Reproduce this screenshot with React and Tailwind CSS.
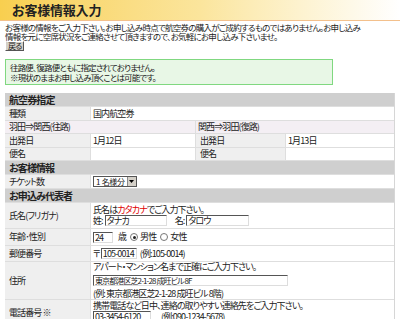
import React from "react";

const jp = { fontFamily: '"Noto Sans CJK JP", "Noto Sans", sans-serif' };

function Box({ w, children, className = "" }) {
  return (
    <span
      className={`inline-flex items-center h-[11px] ${w} border border-t-[#555] border-l-[#555] border-b-[#ddd] border-r-[#ddd] bg-white px-[1px] text-[9px] leading-[9px] text-[#222] whitespace-nowrap overflow-hidden ${className}`}
    >
      {children}
    </span>
  );
}

function Radio({ on }) {
  return (
    <span className="inline-flex items-center justify-center w-[8px] h-[8px] rounded-full border border-[#777] bg-white mr-[2px]">
      {on && <span className="w-[3px] h-[3px] rounded-full bg-[#222]" />}
    </span>
  );
}

function Sec({ children }) {
  return (
    <div className="col-span-4 h-[13px] bg-[#cfcfcf] px-[4px] flex items-center font-bold text-[10px]">
      {children}
    </div>
  );
}

function Label({ children, className = "" }) {
  return <div className={`bg-[#efefef] px-[4px] flex items-center whitespace-nowrap ${className}`}>{children}</div>;
}

function Val({ children, className = "" }) {
  return <div className={`bg-white px-[2px] flex items-center whitespace-nowrap ${className}`}>{children}</div>;
}

export default function App() {
  return (
    <div className="w-[400px] h-[319px] overflow-hidden bg-white text-[#222] tracking-[-0.9px] [font-feature-settings:'palt']" style={jp}>
      {/* header */}
      <div className="h-[21px] border-b border-[#f3c08c] bg-gradient-to-r from-[#f8cf4f] via-[#fbe59c] to-white flex items-center pl-[12px]">
        <h1 className="text-[13px] font-bold tracking-[-0.2px] text-[#222]">お客様情報入力</h1>
      </div>

      <div className="px-[5px]">
        <p className="mt-[2px] text-[8.5px] leading-[9px] tracking-[-0.75px] whitespace-nowrap">
          お客様の情報をご入力下さい。お申し込み時点で航空券の購入がご成約するものではありません。お申し込み
          <br />
          情報を元に空席状況をご連絡させて頂きますので、お気軽にお申し込み下さいませ。
        </p>
        <button className="h-[10px] px-[2px] bg-[#d4d0c8] border border-t-white border-l-white border-b-[#555] border-r-[#555] text-[8px] leading-[8px] flex items-center">
          戻る
        </button>

        <div className="mt-[8px] w-[328px] h-[26px] bg-[#e8f7e6] border border-[#80d880] px-[4px] flex flex-col justify-center text-[8.5px] leading-[10px] tracking-[-0.85px]">
          <span>往路便、復路便ともに指定されておりません。</span>
          <span>※現状のままお申し込み頂くことは可能です。</span>
        </div>

        {/* table */}
        <div className="mt-[8px] w-[390px] grid grid-cols-[85px_104px_89px_1fr] gap-px bg-[#dedede] border-r border-[#d6d6d6] text-[9px] leading-[10px]">
          <Sec>航空券指定</Sec>
          <Label className="h-[13px]">種類</Label>
          <Val className="col-span-3">国内航空券</Val>

          <div className="col-span-2 h-[12px] bg-[#f4eff4] px-[4px] flex items-center">羽田⇒関西(往路)</div>
          <div className="col-span-2 h-[12px] bg-[#f4eff4] px-[2px] flex items-center">関西⇒羽田(復路)</div>

          <Label className="h-[13px]">出発日</Label>
          <Val>1月12日</Val>
          <Label>出発日</Label>
          <Val>1月13日</Val>

          <Label className="h-[12px]">便名</Label>
          <Val></Val>
          <Label>便名</Label>
          <Val></Val>

          <Sec>お客様情報</Sec>
          <Label className="h-[13px]">チケット数</Label>
          <Val className="col-span-3">
            <span className="inline-flex items-center h-[11px] border border-[#555] bg-white">
              <span className="px-[2px] text-[8px] leading-[8px] tracking-[-0.3px]">1 名様分</span>
              <span className="w-[9px] h-[9px] bg-[#d4d0c8] border-l border-[#888] flex items-center justify-center">
                <svg width="5" height="3" viewBox="0 0 5 3"><path d="M0 0h5L2.5 3z" fill="#000" /></svg>
              </span>
            </span>
          </Val>

          <Sec>お申込み代表者</Sec>
          <Label className="h-[25px]">氏名(フリガナ)</Label>
          <Val className="col-span-3 flex-col items-start justify-center">
            <span>
              氏名は<span className="text-[#e00000]">カタカナ</span>でご入力下さい。
            </span>
            <span className="flex items-center">
              <span>姓:</span>
              <Box w="w-[62px]" className="ml-[2px]">タナカ</Box>
              <span className="ml-[8px]">名:</span>
              <Box w="w-[63px]" className="ml-[2px]">タロウ</Box>
            </span>
          </Val>

          <Label className="h-[16px]">年齢･性別</Label>
          <Val className="col-span-3">
            <Box w="w-[20px]">24</Box>
            <span className="ml-[5px] mr-[4px]">歳</span>
            <Radio on />
            <span className="mr-[4px]">男性</span>
            <Radio />
            <span>女性</span>
          </Val>

          <Label className="h-[15px]">郵便番号</Label>
          <Val className="col-span-3">
            <span className="mr-[1px]">〒</span>
            <Box w="w-[36px]">105-0014</Box>
            <span className="ml-[3px]">(例:105-0014)</span>
          </Val>

          <Label className="h-[37px]">住所</Label>
          <Val className="col-span-3 flex-col items-start justify-center gap-[3px]">
            <span>アパート・マンション名まで正確にご入力下さい。</span>
            <Box w="w-[195px]">
              <span className="text-[8px]">東京都港区芝2-1-28 成旺ビル 8F</span>
            </Box>
            <span>(例: 東京都港区芝2-1-28 成旺ビル 8階)</span>
          </Val>

          <Label className="h-[26px]">電話番号 ※</Label>
          <Val className="col-span-3 flex-col items-start justify-start pt-[1px]">
            <span>携帯電話など日中、連絡の取りやすい連絡先をご入力下さい。</span>
            <span className="flex items-center">
              <Box w="w-[58px]">03-3454-6120</Box>
              <span className="ml-[10px]">(例:090-1234-5678)</span>
            </span>
          </Val>
        </div>
      </div>
    </div>
  );
}
